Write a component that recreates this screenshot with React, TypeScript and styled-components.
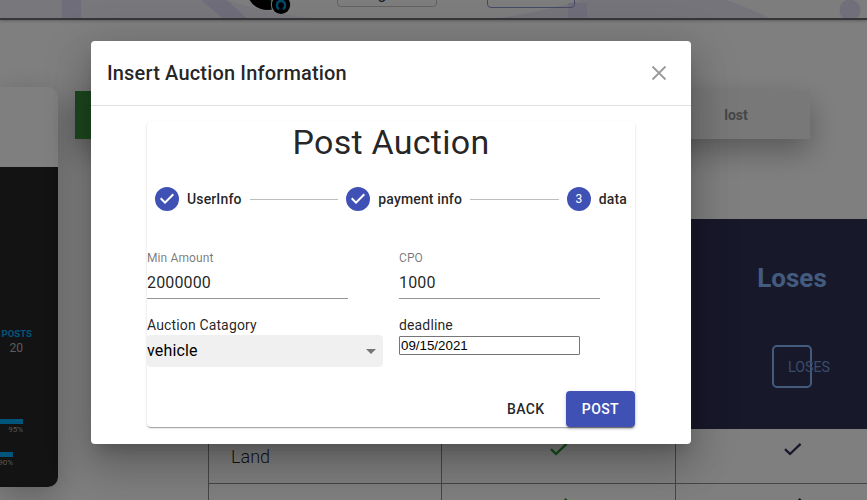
import React from "react";
import styled, { createGlobalStyle } from "styled-components";

const GlobalStyle = createGlobalStyle`
  *, *::before, *::after { box-sizing: border-box; }
  html, body, #root { height: 100%; }
  body {
    margin: 0;
    overflow: hidden;
    background: #fff;
    color: rgba(0, 0, 0, 0.87);
    font-family: Roboto, "Liberation Sans", sans-serif;
  }
`;

const Page = styled.div`
  position: relative;
  height: 500px;
  width: 867px;
  overflow: hidden;
`;

const Header = styled.header`
  position: relative;
  display: flex;
  align-items: flex-start;
  height: 20px;
  border-bottom: 2px solid #6c6c70;
  box-shadow: 0 1px 3px rgba(0, 0, 0, 0.25);
`;

const HeaderArt = styled.svg`
  position: absolute;
  inset: 0;
`;

const LanguageBox = styled.div`
  position: relative;
  display: flex;
  align-items: flex-end;
  justify-content: center;
  width: 100px;
  height: 22px;
  margin: -15px 0 0 337px;
  padding: 0 10px 3px 0;
  border: 1px solid #c4c4c4;
  border-radius: 4px;
  font-size: 16px;
  line-height: 19px;
`;

const SignBox = styled.div`
  position: relative;
  width: 88px;
  height: 22px;
  margin: -14px 0 0 50px;
  border: 1px solid #8d95cf;
  border-radius: 4px;
`;

const Logo = styled.svg`
  position: absolute;
  left: 248px;
  top: 0;
`;

const Body = styled.div`
  display: flex;
  align-items: flex-start;
  gap: 17px;
`;

const ProfileCard = styled.aside`
  width: 58px;
  height: 400px;
  margin-top: 67px;
  flex: none;
  overflow: hidden;
  border-radius: 0 10px 10px 0;
  background: #fff;
  box-shadow: 0 8px 30px rgba(0, 0, 0, 0.25);
`;

const ProfileTop = styled.div`
  height: 80px;
`;

const ProfileDetails = styled.div`
  display: flex;
  flex-direction: column;
  align-items: flex-end;
  height: 320px;
  padding: 160px 26px 0 0;
  background: #262626;
`;

const StatName = styled.div`
  font-size: 9.6px;
  font-weight: 700;
  line-height: 14px;
  color: #03a9f4;
`;

const StatValue = styled.div`
  margin-right: 9px;
  font-size: 12px;
  line-height: 14px;
  color: #bababa;
`;

const Gauge = styled.div<{ $inset: number; $gap: number }>`
  display: flex;
  flex-direction: column;
  align-items: flex-end;
  align-self: stretch;
  margin: ${(p) => p.$gap}px ${(p) => p.$inset}px 0 0;
  font-size: 8px;
  line-height: 12px;
  color: #aaa;
`;

const GaugeBar = styled.div`
  align-self: stretch;
  height: 5px;
  background: #03a9f4;
`;

const Content = styled.main`
  flex: 1;
  min-width: 0;
  padding-top: 71px;
`;

const Tabs = styled.div`
  display: grid;
  grid-template-columns: 587px 148px;
  width: 735px;
  height: 48px;
  box-shadow: 0 12px 30px rgba(0, 0, 0, 0.3);
`;

const Tab = styled.div<{ $active?: boolean }>`
  display: flex;
  align-items: center;
  justify-content: center;
  background: ${(p) => (p.$active ? "#388e3c" : "#f1f1f1")};
  color: #8d8d8d;
  font-size: 14px;
  font-weight: 700;
`;

const Table = styled.div`
  display: grid;
  grid-template-columns: 233px 234px 234px;
  grid-template-rows: 210px 55px 55px;
  width: 701px;
  margin: 80px 0 0 133px;
`;

const HeadCell = styled.div`
  display: flex;
  flex-direction: column;
  align-items: center;
  padding-top: 40px;
  background: #303056;
  color: #86b9fd;
`;

const HeadTitle = styled.div`
  font-size: 26px;
  font-weight: 700;
  line-height: 38px;
`;

const HeadBadge = styled.div`
  display: flex;
  align-items: center;
  width: 40px;
  height: 43px;
  margin-top: 48px;
  padding-left: 14px;
  border: 2px solid #86b9fd;
  border-radius: 5px;
  font-size: 14.2px;
  white-space: nowrap;
  color: #7098d0;
`;

const Cell = styled.div<{ $label?: boolean }>`
  display: flex;
  align-items: center;
  justify-content: ${(p) => (p.$label ? "flex-start" : "center")};
  padding-left: ${(p) => (p.$label ? "22px" : "0")};
  padding-bottom: ${(p) => (p.$label ? "0" : "15px")};
  border-bottom: 1px solid #8c8c8c;
  border-left: 1px solid #8c8c8c;
  font-size: 18px;
  font-weight: 300;
`;

const Backdrop = styled.div`
  position: absolute;
  inset: 0;
  display: flex;
  align-items: flex-start;
  justify-content: center;
  padding: 41px 85px 0 0;
  background: rgba(0, 0, 0, 0.5);
`;

const Dialog = styled.section`
  width: 600px;
  height: 402.5px;
  flex: none;
  border-radius: 4px;
  background: #fff;
  box-shadow: 0 11px 15px -7px rgba(0, 0, 0, 0.2),
    0 24px 38px 3px rgba(0, 0, 0, 0.14), 0 9px 46px 8px rgba(0, 0, 0, 0.12);
`;

const DialogTitle = styled.div`
  display: flex;
  align-items: center;
  justify-content: space-between;
  height: 65px;
  padding: 0 20px 0 16px;
  border-bottom: 1px solid #e0e0e0;
  font-size: 20px;
  font-weight: 500;
  letter-spacing: 0.16px;
`;

const AuctionCard = styled.div`
  width: 488px;
  margin: 15.5px 0 0 56px;
  border-radius: 4px;
  box-shadow: 0 2px 1px -1px rgba(0, 0, 0, 0.2),
    0 1px 1px 0 rgba(0, 0, 0, 0.14), 0 1px 3px 0 rgba(0, 0, 0, 0.12);
`;

const Heading = styled.h4`
  margin: 0;
  padding-bottom: 2px;
  font-size: 34px;
  font-weight: 400;
  line-height: 40px;
  letter-spacing: 0.25px;
  text-align: center;
`;

const Stepper = styled.div`
  display: flex;
  align-items: center;
  padding: 23.5px 8px 24px;
`;

const Step = styled.div`
  display: flex;
  align-items: center;
  gap: 8px;
  font-size: 14px;
  font-weight: 500;
  line-height: 20px;
  letter-spacing: 0.14px;
  white-space: nowrap;
`;

const Connector = styled.div`
  flex: 1;
  height: 1px;
  margin: 0 8px;
  background: #bdbdbd;
`;

const StepNumber = styled.div`
  display: flex;
  align-items: center;
  justify-content: center;
  width: 24px;
  height: 24px;
  border-radius: 50%;
  background: #3f51b5;
  color: #fff;
  font-size: 12px;
  font-weight: 400;
  letter-spacing: 0;
`;

const Fields = styled.div`
  display: grid;
  grid-template-columns: 236px 236px;
  column-gap: 16px;
  row-gap: 16px;
  padding-top: 16px;
`;

const Field = styled.div`
  display: flex;
  flex-direction: column;
  align-items: flex-start;
`;

const SmallLabel = styled.label`
  font-size: 12px;
  line-height: 14px;
  letter-spacing: 0.11px;
  color: rgba(0, 0, 0, 0.54);
`;

const LineInput = styled.input`
  width: 201px;
  height: 34px;
  padding: 3px 0 2px;
  border: 0;
  border-bottom: 1px solid #949494;
  outline: 0;
  background: none;
  color: rgba(0, 0, 0, 0.87);
  font: 400 16px Roboto, sans-serif;
  letter-spacing: 0.15px;
`;

const Label = styled.label`
  font-size: 14px;
  line-height: 20px;
  letter-spacing: 0.14px;
`;

const SelectBox = styled.div`
  display: flex;
  align-items: center;
  justify-content: space-between;
  align-self: stretch;
  height: 32px;
  border-radius: 4px;
  background: #f0f0f0;
  color: #000;
  font-size: 16px;
  letter-spacing: 0.15px;
`;

const SelectValue = styled.span`
  padding-bottom: 2px;
`;

const DateInput = styled.input`
  width: 181px;
  height: 19px;
  margin-top: 1px;
  padding: 0 1px;
  border: 1px solid #767676;
  border-radius: 1px;
  background: #fff;
  color: #000;
  font: 13.333px "Liberation Sans", Arial, sans-serif;
`;

const Actions = styled.div`
  display: flex;
  justify-content: flex-end;
  gap: 8px;
  margin-top: 24px;
`;

const Button = styled.button<{ $primary?: boolean }>`
  height: 36px;
  min-width: 64px;
  padding: ${(p) => (p.$primary ? "6px 16px" : "6px 8px")};
  border: 0;
  border-radius: 4px;
  background: ${(p) => (p.$primary ? "#3f51b5" : "transparent")};
  color: ${(p) => (p.$primary ? "#fff" : "rgba(0, 0, 0, 0.87)")};
  font: 500 14px Roboto, sans-serif;
  letter-spacing: 0.4px;
  box-shadow: ${(p) =>
    p.$primary
      ? "0 3px 1px -2px rgba(0,0,0,.2), 0 2px 2px 0 rgba(0,0,0,.14), 0 1px 5px 0 rgba(0,0,0,.12)"
      : "none"};
`;

const CheckMark = ({ color }: { color: string }) => (
  <svg width="20" height="14" viewBox="0 0 20 14">
    <path d="M2 7.2 L7 12 L17.6 1.8" fill="none" stroke={color} strokeWidth="2.3" />
  </svg>
);

const DoneIcon = () => (
  <svg width="24" height="24" viewBox="0 0 24 24" fill="#3f51b5">
    <path d="M12 0a12 12 0 1 0 0 24 12 12 0 0 0 0-24zm-2 17l-5-5 1.4-1.4 3.6 3.6 7.6-7.6L19 8l-9 9z" />
  </svg>
);

export default function App() {
  return (
    <>
      <GlobalStyle />
      <Page>
        <Header>
          <HeaderArt width="867" height="18" viewBox="0 0 867 18">
            <rect width="867" height="18" fill="#fbfbfb" />
            <path d="M0 0H201L222 18H0z" fill="#f1f1f9" />
            <path d="M62 0H81V18H62z" fill="#dfdbf5" />
            <path d="M201 0H227L247 18H222z" fill="#dfdbf5" />
            <path d="M227 0Q260 12 313 18H247z" fill="#efeef8" />
            <path d="M500 18Q550 10 580 0H727Q747 7 769 18z" fill="#eae9f6" />
            <path d="M568 3H587V18H568z" fill="#dfdbf5" />
            <circle cx="850" cy="10" r="10.5" fill="#e1def4" />
          </HeaderArt>
          <LanguageBox>g</LanguageBox>
          <SignBox />
        </Header>
        <Body>
          <ProfileCard>
            <ProfileTop />
            <ProfileDetails>
              <StatName>POSTS</StatName>
              <StatValue>20</StatValue>
              <Gauge $gap={64} $inset={9}>
                <GaugeBar />
                95%
              </Gauge>
              <Gauge $gap={16} $inset={19}>
                <GaugeBar />
                90%
              </Gauge>
            </ProfileDetails>
          </ProfileCard>
          <Content>
            <Tabs>
              <Tab $active />
              <Tab>lost</Tab>
            </Tabs>
            <Table>
              <HeadCell />
              <HeadCell />
              <HeadCell>
                <HeadTitle>Loses</HeadTitle>
                <HeadBadge>LOSES</HeadBadge>
              </HeadCell>
              <Cell $label>Land</Cell>
              <Cell><CheckMark color="#1fa32a" /></Cell>
              <Cell><CheckMark color="#303056" /></Cell>
              <Cell />
              <Cell><CheckMark color="#1fa32a" /></Cell>
              <Cell><CheckMark color="#303056" /></Cell>
            </Table>
          </Content>
        </Body>
        <Logo width="54" height="18" viewBox="0 0 54 18">
          <path d="M1 -1Q7 10 20 10Q32 10 38 -1z" fill="#000" />
          <path d="M21 -1L24 2L27 -1z" fill="#00a2e8" />
          <circle cx="33" cy="4.8" r="10.2" fill="#f4f4f4" />
          <circle cx="33" cy="4.8" r="9.2" fill="#000" />
          <path d="M31.2 9C28 7.8 28 1 33 1S38 7.8 34.8 9" fill="none" stroke="#008fd0" strokeWidth="2.4" />
        </Logo>
        <Backdrop>
          <Dialog>
            <DialogTitle>
              Insert Auction Information
              <svg width="24" height="24" viewBox="0 0 24 24">
                <path d="M5.5 5.5L18.5 18.5M18.5 5.5L5.5 18.5" stroke="#9a9a9a" strokeWidth="1.8" />
              </svg>
            </DialogTitle>
            <AuctionCard>
              <Heading>Post Auction</Heading>
              <Stepper>
                <Step><DoneIcon />UserInfo</Step>
                <Connector />
                <Step><DoneIcon />payment info</Step>
                <Connector />
                <Step><StepNumber>3</StepNumber>data</Step>
              </Stepper>
              <Fields>
                <Field>
                  <SmallLabel>Min Amount</SmallLabel>
                  <LineInput defaultValue="2000000" />
                </Field>
                <Field>
                  <SmallLabel>CPO</SmallLabel>
                  <LineInput defaultValue="1000" />
                </Field>
                <Field>
                  <Label>Auction Catagory</Label>
                  <SelectBox>
                    <SelectValue>vehicle</SelectValue>
                    <svg width="24" height="24" viewBox="0 0 24 24">
                      <path d="M7 10l5 5 5-5z" fill="#757575" />
                    </svg>
                  </SelectBox>
                </Field>
                <Field>
                  <Label>deadline</Label>
                  <DateInput defaultValue="09/15/2021" />
                </Field>
              </Fields>
              <Actions>
                <Button>BACK</Button>
                <Button $primary>POST</Button>
              </Actions>
            </AuctionCard>
          </Dialog>
        </Backdrop>
      </Page>
    </>
  );
}
